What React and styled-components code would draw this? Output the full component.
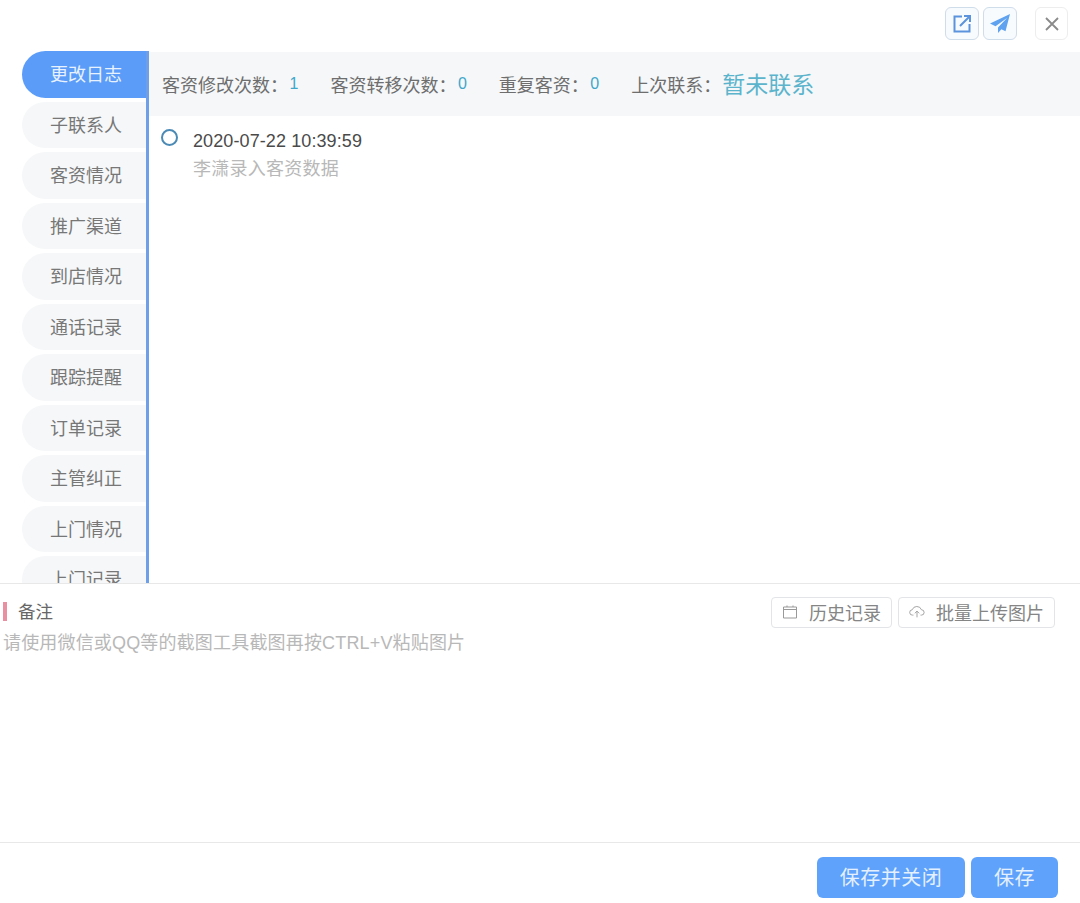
import styled, { createGlobalStyle } from 'styled-components'

const tabs = ['更改日志', '子联系人', '客资情况', '推广渠道', '到店情况', '通话记录', '跟踪提醒', '订单记录', '主管纠正', '上门情况', '上门记录']

const stats = [
    { label: '客资修改次数：', value: '1' },
    { label: '客资转移次数：', value: '0' },
    { label: '重复客资：', value: '0' },
    { label: '上次联系：', value: '暂未联系', big: true },
]

const GlobalStyle = createGlobalStyle`
    html, body {
        margin: 0;
        padding: 0;
        background: #fff;
    }
    body {
        font-family: "Liberation Sans", "Noto Sans CJK SC", sans-serif;
        color: #606266;
    }
`

const Page = styled.div`
    width: 1080px;
    height: 903px;
    display: flex;
    flex-direction: column;
    overflow: hidden;
`

const TopBar = styled.div`
    height: 51px;
    flex: none;
    display: flex;
    align-items: flex-start;
    justify-content: flex-end;
    padding: 7px 12px 0 0;
    box-sizing: border-box;
`

const IconButton = styled.button`
    width: 34px;
    height: 33px;
    padding: 0;
    margin-left: ${(props) => props.gap || 0}px;
    display: flex;
    align-items: center;
    justify-content: center;
    background: #f8fbfe;
    border: 1px solid #cfdce9;
    border-radius: 6px;
`

const CloseButton = styled(IconButton)`
    width: 33px;
    background: #fff;
    border-color: #ededed;
`

const Middle = styled.div`
    height: 532px;
    flex: none;
    display: flex;
    overflow: hidden;
`

const Sidebar = styled.div`
    width: 149px;
    flex: none;
    box-sizing: border-box;
    padding-left: 22px;
    border-right: 3px solid #6f9fe6;
    display: flex;
    flex-direction: column;
    gap: 4px;
    overflow: hidden;
`

const Tab = styled.div`
    flex: none;
    height: 46.5px;
    box-sizing: border-box;
    display: flex;
    align-items: center;
    padding: 0 0 2px 28px;
    border-radius: 24px 0 0 24px;
    font-size: 18px;
    background: ${(props) => (props.active ? '#5a9cf8' : '#f6f7f9')};
    color: ${(props) => (props.active ? '#e8f2ff' : '#777')};
`

const Content = styled.div`
    flex: 1;
    min-width: 0;
`

const StatsBar = styled.div`
    height: 64px;
    margin-top: 1px;
    display: flex;
    align-items: center;
    padding-left: 13px;
    background: #f5f7f9;
    font-size: 18px;
`

const Stat = styled.div`
    display: flex;
    align-items: center;
    margin-right: 32px;
    color: #6e6e6e;
`

const StatValue = styled.span`
    color: ${(props) => (props.big ? '#5cb4cc' : '#3fa7c9')};
    font-size: ${(props) => (props.big ? 23 : 16)}px;
    margin-left: ${(props) => (props.big ? 1 : 1.5)}px;
    margin-top: ${(props) => (props.big ? -3 : 0)}px;
`

const LogRow = styled.div`
    display: flex;
    padding: 13px 0 0 12px;
`

const Dot = styled.div`
    width: 13px;
    height: 13px;
    border: 2px solid #4a8ab5;
    border-radius: 50%;
    flex: none;
`

const LogText = styled.div`
    margin: 1px 0 0 15px;
`

const LogTime = styled.div`
    font-size: 18px;
    line-height: 22px;
    letter-spacing: 0.1px;
    color: #4a4a4a;
`

const LogNote = styled.div`
    font-size: 18px;
    line-height: 26px;
    letter-spacing: 0.25px;
    margin-top: 4px;
    color: #b8b8b8;
`

const Notes = styled.div`
    height: 260px;
    flex: none;
    box-sizing: border-box;
    border-top: 1px solid #e8e8e8;
    border-bottom: 1px solid #e8e8e8;
    padding: 13px 25px 0 3px;
`

const NotesHead = styled.div`
    display: flex;
    align-items: center;
    justify-content: space-between;
`

const NotesTitle = styled.div`
    display: flex;
    align-items: center;
    height: 31px;
    font-size: 17.500px;
    color: #666;
    margin-top: -4px;
`

const Marker = styled.span`
    width: 4px;
    height: 19px;
    margin: 2px 11px 0 0;
    background: #e88fa2;
`

const NotesTools = styled.div`
    display: flex;
    gap: 6px;
`

const ToolButton = styled.button`
    height: 31px;
    padding: 0 10px 1px;
    display: flex;
    align-items: center;
    gap: 11px;
    background: #fff;
    border: 1px solid #e2e4e8;
    border-radius: 4px;
    font-family: inherit;
    font-size: 18px;
    color: #858585;
`

const Placeholder = styled.div`
    font-size: 18px;
    line-height: 24px;
    letter-spacing: 0.17px;
    margin-top: 3px;
    color: #b8b8b8;
`

const Footer = styled.div`
    flex: 1;
    display: flex;
    justify-content: flex-end;
    gap: 6px;
    padding: 14px 22px 0 0;
`

const SaveButton = styled.button`
    width: ${(props) => props.width}px;
    height: 41px;
    padding: 0 0 3px;
    background: #5fa2fb;
    border: none;
    border-radius: 6px;
    font-family: inherit;
    font-size: 20px;
    letter-spacing: 0.5px;
    color: #e4f0ff;
`

const App = () => {
    return (
        <Page>
            <GlobalStyle />
            <TopBar>
                <IconButton>
                    <svg width="20" height="20" viewBox="0 0 20 20" fill="none" stroke="#5b93dc" strokeWidth="2">
                        <path d="M10 2.500H2.500v15h15V10" />
                        <path d="M8 12 17.500 2.500M12 2h6v6" />
                    </svg>
                </IconButton>
                <IconButton gap={4}>
                    <svg width="22" height="22" viewBox="0 0 22 22" fill="#5fa2ef">
                        <path d="M21 1 1 10.500l5.500 2.800L18 5 9 14.500V20l3.400-3.800 4.100 2z" />
                    </svg>
                </IconButton>
                <CloseButton gap={18}>
                    <svg width="16" height="16" viewBox="0 0 16 16" stroke="#8a8a8a" strokeWidth="1.8">
                        <path d="M2 2 14 14M14 2 2 14" />
                    </svg>
                </CloseButton>
            </TopBar>
            <Middle>
                <Sidebar>
                    {tabs.map((tab, index) => (
                        <Tab key={tab} active={index === 0}>
                            {tab}
                        </Tab>
                    ))}
                </Sidebar>
                <Content>
                    <StatsBar>
                        {stats.map((stat) => (
                            <Stat key={stat.label}>
                                {stat.label}
                                <StatValue big={stat.big}>{stat.value}</StatValue>
                            </Stat>
                        ))}
                    </StatsBar>
                    <LogRow>
                        <Dot />
                        <LogText>
                            <LogTime>2020-07-22 10:39:59</LogTime>
                            <LogNote>李潇录入客资数据</LogNote>
                        </LogText>
                    </LogRow>
                </Content>
            </Middle>
            <Notes>
                <NotesHead>
                    <NotesTitle>
                        <Marker />
                        备注
                    </NotesTitle>
                    <NotesTools>
                        <ToolButton>
                            <svg width="16" height="16" viewBox="0 0 16 16" fill="none" stroke="#999" strokeWidth="1">
                                <path d="M1.500 3h13v11h-13zM1.500 5.500h13M5 1.500V3M11 1.500V3" />
                            </svg>
                            历史记录
                        </ToolButton>
                        <ToolButton>
                            <svg width="16" height="16" viewBox="0 0 18 16" fill="none" stroke="#999" strokeWidth="1">
                                <path d="M5 11.500H4a3 3 0 0 1-.4-6A5.500 5.500 0 0 1 14 5.500a3 3 0 0 1 0 6h-1" />
                                <path d="M9 14V7M6.500 9.500 9 7l2.500 2.500" />
                            </svg>
                            批量上传图片
                        </ToolButton>
                    </NotesTools>
                </NotesHead>
                <Placeholder>请使用微信或QQ等的截图工具截图再按CTRL+V粘贴图片</Placeholder>
            </Notes>
            <Footer>
                <SaveButton width={148}>保存并关闭</SaveButton>
                <SaveButton width={87}>保存</SaveButton>
            </Footer>
        </Page>
    )
}

export default App
